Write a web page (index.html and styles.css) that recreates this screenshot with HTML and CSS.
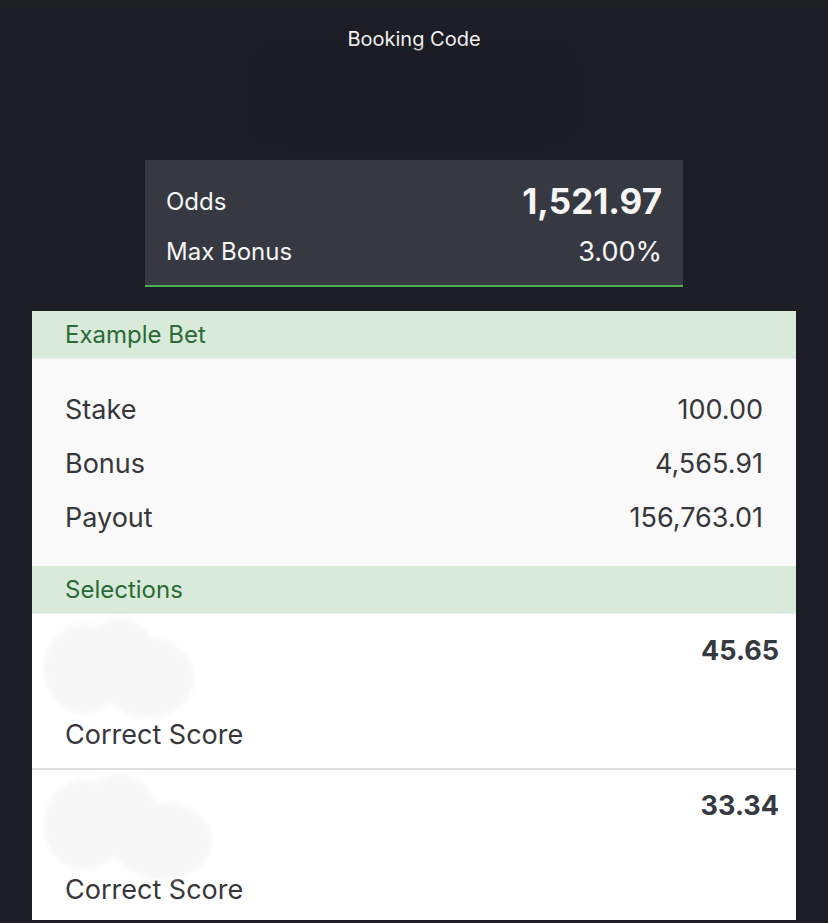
FILE: index.html
```html
<!DOCTYPE html>
<html lang="en">
<head>
    <meta charset="UTF-8">
    <title>Booking Code</title>
    <link rel="stylesheet" href="styles.css">
</head>
<body>

    <header class="top">
        <h1 class="top-title">Booking Code</h1>
        <div class="code-box"></div>
    </header>

    <div class="odds-card">
        <div class="odds-row">
            <span>Odds</span>
            <span class="odds-total">1,521.97</span>
        </div>
        <div class="odds-row">
            <span>Max Bonus</span>
            <span class="odds-bonus">3.00%</span>
        </div>
    </div>

    <div class="panel">
        <div class="section-head">Example Bet</div>
        <div class="bet-body">
            <div class="bet-row">
                <span>Stake</span>
                <span>100.00</span>
            </div>
            <div class="bet-row">
                <span>Bonus</span>
                <span>4,565.91</span>
            </div>
            <div class="bet-row">
                <span>Payout</span>
                <span>156,763.01</span>
            </div>
        </div>

        <div class="section-head">Selections</div>
        <div class="sel-row">
            <div class="smudge">
                <i class="blot blot-1"></i>
                <i class="blot blot-2"></i>
                <i class="blot blot-3"></i>
            </div>
            <div class="sel-odds">45.65</div>
            <div class="sel-gap"></div>
            <div class="sel-market">Correct Score</div>
        </div>
        <div class="sel-row">
            <div class="smudge">
                <i class="blot blot-1"></i>
                <i class="blot blot-2"></i>
                <i class="blot blot-4"></i>
            </div>
            <div class="sel-odds">33.34</div>
            <div class="sel-gap"></div>
            <div class="sel-market">Correct Score</div>
        </div>
    </div>

</body>
</html>
```

FILE: styles.css
```css
* {
    margin: 0;
    padding: 0;
    box-sizing: border-box;
}

body {
    font-family: Inter, "Liberation Sans", Arial, sans-serif;
    background-color: #1c1d25;
    border-top: 8px solid #1f2024;
}

.top {
    text-align: center;
    padding-top: 20px;
}

    .top-title {
        font-size: 20px;
        font-weight: 400;
        line-height: 22px;
        color: #f2f2f2;
    }

    .code-box {
        width: 310px;
        height: 80px;
        margin: 4px auto 26px;
        border-radius: 24px;
        background-color: #1b1c23;
        filter: blur(6px);
    }

.odds-card {
    width: 538px;
    margin: 0 auto;
    padding: 16px 21px 9px;
    background-color: #363942;
    border-bottom: 2px solid #4caf50;
    color: #f5f5f5;
}

    .odds-row {
        display: flex;
        justify-content: space-between;
        align-items: center;
        height: 50px;
        font-size: 24px;
    }

    .odds-total {
        font-size: 35px;
        font-weight: 700;
    }

    .odds-bonus {
        font-size: 27px;
    }

.panel {
    margin: 24px 32px 0;
    background-color: #fff;
}

.section-head {
    height: 48px;
    line-height: 48px;
    padding-left: 33px;
    background-color: #d9eadb;
    border-bottom: 1px solid #e3eee4;
    color: #2b6b36;
    font-size: 24px;
}

.bet-body {
    background-color: #f9f9f9;
    padding: 23px 33px 22px;
}

    .bet-row {
        display: flex;
        justify-content: space-between;
        align-items: center;
        height: 54px;
        font-size: 27px;
        color: #37373b;
    }

.sel-row {
    position: relative;
    padding: 22px 17px 18px 33px;
    border-bottom: 2px solid #dedede;
}

    .sel-row:last-child {
        border-bottom: none;
        padding-top: 21px;
        padding-bottom: 15px;
    }

    .sel-odds {
        text-align: right;
        font-size: 27px;
        font-weight: 700;
        line-height: 30px;
        color: #36393f;
    }

    .sel-gap {
        height: 54px;
    }

    .sel-market {
        font-size: 27px;
        line-height: 30px;
        color: #37373b;
    }

.smudge {
    position: absolute;
    left: 10px;
    top: 4px;
    width: 170px;
    height: 110px;
    filter: blur(2px);
}

    .blot {
        position: absolute;
        border-radius: 50%;
        background-color: #f7f7f7;
    }

    .blot-1 {
        left: 2px;
        top: 6px;
        width: 80px;
        height: 90px;
    }

    .blot-2 {
        left: 40px;
        top: 0;
        width: 75px;
        height: 85px;
    }

    .blot-3 {
        left: 60px;
        top: 20px;
        width: 92px;
        height: 80px;
    }

    .blot-4 {
        left: 70px;
        top: 28px;
        width: 100px;
        height: 78px;
    }
```
